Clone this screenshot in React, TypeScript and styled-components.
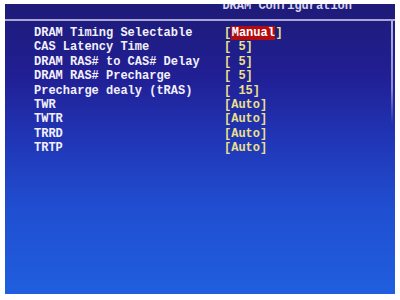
import styled, { createGlobalStyle } from 'styled-components';

const GlobalStyle = createGlobalStyle`
  html, body {
    margin: 0;
    padding: 0;
    background: #ffffff;
  }
  body {
    font-family: "Liberation Mono", "DejaVu Sans Mono", monospace;
  }
`;

const Frame = styled.div`
  width: 400px;
  height: 300px;
  box-sizing: border-box;
  padding: 4px 5px 6px 5px;
  background: #ffffff;
`;

const Screen = styled.div`
  width: 100%;
  height: 100%;
  display: flex;
  flex-direction: column;
  overflow: hidden;
  background: linear-gradient(
    180deg,
    #1e1b78 0%,
    #211f94 25%,
    #2034b4 45%,
    #204ed0 70%,
    #1f5fdf 100%
  );
`;

const Header = styled.div`
  height: 15px;
  flex-shrink: 0;
  display: flex;
  justify-content: flex-end;
  padding-right: 43px;
  overflow: hidden;
  border-bottom: 2px solid #a9a6d6;
`;

const Title = styled.span`
  margin-top: -6px;
  font-size: 12px;
  font-weight: bold;
  line-height: 16px;
  color: #d8d6f0;
  white-space: pre;
`;

const Panel = styled.div`
  flex: 1;
  display: flex;
  flex-direction: column;
  padding: 5px 0 0 29px;
  margin-right: 2px;
  border-right: 2px solid;
  border-image: linear-gradient(180deg, #b4b2e0 0%, #8c8ad0 25%, rgba(40, 80, 210, 0) 38%) 1;
`;

const Row = styled.div`
  display: grid;
  grid-template-columns: 190px auto;
  height: 14.4px;
  line-height: 14.4px;
  font-size: 12px;
  font-weight: bold;
  white-space: pre;
`;

const Label = styled.span`
  color: #f2f0fa;
`;

const Value = styled.span`
  color: #ece08a;
`;

const Selected = styled.span`
  background: #b20c12;
  color: #ffffff;
  padding: 0 0.5px;
`;

const rows: { label: string; value: string; selected?: boolean }[] = [
  { label: 'DRAM Timing Selectable', value: 'Manual', selected: true },
  { label: 'CAS Latency Time', value: ' 5' },
  { label: 'DRAM RAS# to CAS# Delay', value: ' 5' },
  { label: 'DRAM RAS# Precharge', value: ' 5' },
  { label: 'Precharge dealy (tRAS)', value: ' 15' },
  { label: 'TWR', value: 'Auto' },
  { label: 'TWTR', value: 'Auto' },
  { label: 'TRRD', value: 'Auto' },
  { label: 'TRTP', value: 'Auto' },
];

export default function App() {
  return (
    <>
      <GlobalStyle />
      <Frame>
        <Screen>
          <Header>
            <Title>DRAM Configuration</Title>
          </Header>
          <Panel>
            {rows.map((r) => (
              <Row key={r.label}>
                <Label>{r.label}</Label>
                <Value>
                  [{r.selected ? <Selected>{r.value}</Selected> : r.value}]
                </Value>
              </Row>
            ))}
          </Panel>
        </Screen>
      </Frame>
    </>
  );
}
